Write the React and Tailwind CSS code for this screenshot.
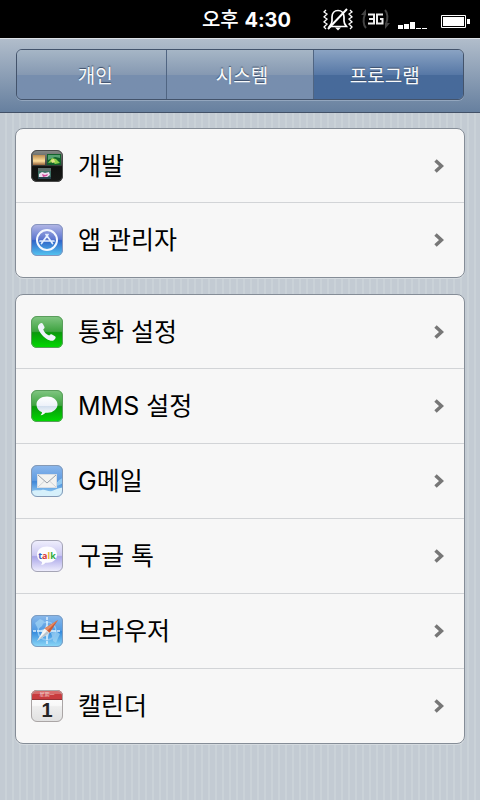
import React from 'react';

const frame = 'h-8 w-8 shrink-0';

function Gloss({ id, from, to, stroke, children }) {
  return (
    <svg viewBox="0 0 32 32" className={frame} aria-hidden="true">
      <defs>
        <linearGradient id={id} x1="0" y1="0" x2="0" y2="1">
          <stop offset="0" stopColor={from[0]} />
          <stop offset="0.48" stopColor={from[1]} />
          <stop offset="0.52" stopColor={to[0]} />
          <stop offset="1" stopColor={to[1]} />
        </linearGradient>
        <clipPath id={id + 'c'}><rect width="32" height="32" rx="6" /></clipPath>
      </defs>
      <g clipPath={`url(#${id}c)`}>
        <rect width="32" height="32" fill={`url(#${id})`} />
        {children}
      </g>
      <rect x="0.5" y="0.5" width="31" height="31" rx="5.5" fill="none" stroke={stroke} />
    </svg>
  );
}

const DevIcon = () => (
  <Gloss id="dev" from={['#8a8d8a', '#3a3d3b']} to={['#101210', '#161816']} stroke="#4a4a4a">
    <defs>
      <linearGradient id="sunset" x1="0" y1="0" x2="0" y2="1">
        <stop offset="0" stopColor="#b98a4e" /><stop offset="0.6" stopColor="#ffdf9c" /><stop offset="1" stopColor="#93613a" />
      </linearGradient>
    </defs>
    <rect x="2" y="5" width="12" height="10" fill="url(#sunset)" />
    <rect x="16" y="4" width="14" height="11" fill="#12612c" />
    <path d="M17 5h12v3l-5-1-7 3z" fill="#57a272" />
    <path d="M17 13l4-5 4 1 4 4-5 1-2-2z" fill="#8fd04b" />
    <path d="M20 10l3-1 1 3-3 1z" fill="#e5e08a" />
    <rect x="7" y="18" width="13" height="11" fill="#3e7265" />
    <rect x="7" y="18" width="13" height="3" fill="#5d6f6b" />
    <path d="M8 24l3-2 3 1 4-1 1 3-4 3-4-1-3 1z" fill="#eddff0" />
    <path d="M11 24l3 1 3-1-1 2-4 1z" fill="#d34a9c" />
    <path d="M7 27h13v2H7z" fill="#28424d" />
  </Gloss>
);

const StoreIcon = () => (
  <Gloss id="store" from={['#b6b9e6', '#5c76cf']} to={['#2f63c8', '#55c8f2']} stroke="#8795bd">
    <circle cx="16" cy="16" r="10" fill="none" stroke="#f4f8ff" strokeWidth="2" />
    <path d="M17 10.500l-6.500 9M15 10.500l6.500 9M9 17h14" fill="none" stroke="#e6f0ff" strokeWidth="1.700" strokeLinecap="round" />
  </Gloss>
);

const PhoneIcon = () => (
  <Gloss id="phone" from={['#83c784', '#3ea340']} to={['#0a980c', '#00dc00']} stroke="#5a9d5c">
    <path d="M8 8.500c1.500-1.800 3-2 3.800-.8l1.600 3c.5 1-.2 1.900-1.200 2.700 1.200 3 3 4.800 6 6.200.9-1.200 1.800-1.700 2.800-1.200l3 1.900c1.200.9.800 2.400-1.200 3.900-1.500 1.100-4 .8-7.500-1.400C11 19.700 7.500 15 7 11.500c-.2-1.200.2-2.200 1-3z" fill="#eef3fa" />
  </Gloss>
);

const MessageIcon = () => (
  <Gloss id="message" from={['#83c784', '#3ea340']} to={['#0a980c', '#00dc00']} stroke="#5a9d5c">
    <defs>
      <linearGradient id="bubble" x1="0" y1="0" x2="0" y2="1">
        <stop offset="0" stopColor="#fff" /><stop offset="0.48" stopColor="#eef2fa" /><stop offset="0.52" stopColor="#d2dfee" /><stop offset="1" stopColor="#fff" />
      </linearGradient>
    </defs>
    <path d="M16 6.500c6 0 10.500 3.500 10.500 8s-4.500 8.300-10 8.300h-2c-1 1.200-2.500 2.200-5 2.500 1-.9 1.500-1.800 1.500-3C7.500 20.800 5.500 18 5.500 14.500c0-4.500 4.500-8 10.500-8z" fill="url(#bubble)" />
  </Gloss>
);

const MailIcon = () => (
  <Gloss id="mail" from={['#8db8ec', '#5f9be0']} to={['#3f87d8', '#b0e1fa']} stroke="#8499b5">
    <path d="M0 27c4-3 8-1 11-2s6 2 10 1 7-4 11-3v9H0z" fill="#d6f0fb" />
    <path d="M23 19c3-1 5-5 9-6v5c-3 2-5 3-8 3z" fill="#8fc8f2" />
    <rect x="6.500" y="9.500" width="19" height="13" fill="#f3f3f1" stroke="#d7dde5" />
    <path d="M7 22l6.500-6M25 22l-6.500-6" stroke="#d0d3d6" />
    <path d="M7 10l9 8 9-8" fill="none" stroke="#999fa8" />
  </Gloss>
);

const TalkIcon = () => (
  <Gloss id="talk" from={['#f1f0fd', '#cbc8f2']} to={['#aaa6e8', '#f3f2ff']} stroke="#a5a5b5">
    <path d="M16 6.500c6 0 10 3.500 10 8.200s-4 8-9.500 8h-2c-1 1.200-2 1.900-4.500 2.300 1-.9 1-1.800 1-3C7.700 20.700 6 18 6 14.700c0-4.700 4-8.200 10-8.200z" fill="#fcfcff" />
    <text x="16" y="19" textAnchor="middle" className="font-['Open_Sans',sans-serif] text-[9px] font-bold">
      <tspan fill="#2d5fc4">t</tspan><tspan fill="#d93a3a">a</tspan><tspan fill="#e8b52c">l</tspan><tspan fill="#2fab42">k</tspan>
    </text>
  </Gloss>
);

const BrowserIcon = () => (
  <Gloss id="browser" from={['#8bb9ea', '#529be3']} to={['#3489dc', '#8fdbf8']} stroke="#7d9cc0">
    <path d="M4 8l5-4 4 2-2 5-4 3zM20 18l5-2 4 3-2 4-2 5-3-2-1-5z" fill="#a3d5f3" opacity="0.7" />
    <circle cx="16" cy="16" r="9" fill="none" stroke="#8fc6f1" strokeWidth="1.500" />
    <path d="M16 2v28M2 16h28" stroke="#dff1ff" strokeWidth="1.500" strokeDasharray="3 1" />
    <path d="M16 6l2 8 8 2-8 2-2 8-2-8-8-2 8-2z" fill="#c3e3fa" />
    <path d="M27 5L18.500 18l-5-4.500z" fill="#c95a37" />
    <path d="M27 5L16 16l-2.500-2.500z" fill="#e48b66" />
    <path d="M6 26l7.500-12.500 5 4.500z" fill="#f6f6f4" />
    <path d="M6 26l10-10 2.500 2z" fill="#bcc5ce" />
  </Gloss>
);

const CalendarIcon = () => (
  <Gloss id="calendar" from={['#ffffff', '#f8f8f8']} to={['#eeeeee', '#e0e0e0']} stroke="#aaa5a5">
    <rect width="32" height="9" fill="#c83c3f" />
    <rect width="32" height="4" fill="#d66b6b" />
    <path d="M0 9.500h32" stroke="#953236" />
    <text x="16" y="6" textAnchor="middle" fill="#f5d5d5" className="font-['Noto_Sans_CJK_SC',sans-serif] text-[5px]">星期一</text>
    <text x="16" y="27" textAnchor="middle" fill="#252525" className="font-['Liberation_Sans',sans-serif] text-[20px] font-bold">1</text>
  </Gloss>
);

const groups = [
  [
    ['개발', DevIcon],
    ['앱 관리자', StoreIcon],
  ],
  [
    ['통화 설정', PhoneIcon],
    ['MMS 설정', MessageIcon],
    ['G메일', MailIcon],
    ['구글 톡', TalkIcon],
    ['브라우저', BrowserIcon],
    ['캘린더', CalendarIcon],
  ],
];

function StatusBar() {
  return (
    <div className="flex h-[38px] items-center justify-end bg-black pr-2.5 text-white">
      <span className="mr-8 pt-0.5 font-['Inter','Noto_Sans_CJK_KR',sans-serif] text-xl leading-6">
        <span className="font-medium">오후</span> <span className="font-bold">4:30</span>
      </span>
      <svg viewBox="0 0 30 24" className="mr-2 h-6 w-[30px]" fill="none" stroke="#fff" aria-hidden="true">
        <path d="M3 3l-2 2 3 2-3 3 3 2-3 3 3 2-3 3 2 2M27 3l2 2-3 2 3 3-3 2 3 3-3 2 3 3-2 2" strokeWidth="1.300" />
        <path d="M6.500 19.500h17c-1.500-2-2.500-3-2.500-5.500v-4c0-4-2.500-6.500-6-6.500S9 6 9 10v4c0 2.500-1 3.500-2.500 5.500z" strokeWidth="1.700" />
        <path d="M5 22L24 2" strokeWidth="2" />
        <path d="M12 20.500h6l-3 3z" fill="#fff" stroke="none" />
      </svg>
      <svg viewBox="0 0 29 22" className="mr-2 h-[22px] w-[29px]" aria-hidden="true">
        <path d="M5 20c-3-3-3-9-1-14M24 2c3 3 3 9 1 14" fill="none" stroke="#444" strokeWidth="2" />
        <path d="M0 7l5-6v6zM29 15l-5 6v-6z" fill="#444" />
        <path d="M7 6.500h6v9H7M8 11h5M22 6.500h-6v9h5.500V11H19" fill="none" stroke="#eee" strokeWidth="2" />
      </svg>
      <svg viewBox="0 0 30 24" className="mr-3 h-6 w-[30px]" fill="#fff" shapeRendering="crispEdges" aria-hidden="true">
        <path d="M0 18h5v4H0zM6 17h5v5H6zM12 15h5v7h-5zM18 21h5v1h-5zM24 21h5v1h-5z" />
      </svg>
      <svg viewBox="0 0 30 24" className="h-6 w-[30px]" aria-hidden="true">
        <path d="M1.500 8.500h24v12h-24z" fill="none" stroke="#fff" />
        <path d="M3 10h21v9H3zM27 12h3v5h-3z" fill="#fff" />
      </svg>
    </div>
  );
}

function Tabs() {
  const shared = "pt-1 text-center text-[19px] leading-6 text-[#f8fafc] [text-shadow:0_-1px_1px_#3a4c66]";
  const plain = "bg-linear-to-b from-[#a6b6c6] from-0% via-[#8699b2] via-50% to-[#778eae] to-50%";
  const current = "bg-linear-to-b from-[#8aa3c3] from-0% via-[#5778a6] via-50% to-[#476a9a] to-50%";
  return (
    <header className="border-t border-b border-t-[#dce1e7] border-b-[#425167] bg-linear-to-b from-[#b1bdcb] to-[#67809f] px-4 pt-2.5 pb-3">
      <nav className="grid h-[51px] grid-cols-3 overflow-hidden rounded-md border border-[#43536b] shadow-[0_1px_0_#93a6be]">
        <button type="button" className={`${shared} ${plain} pl-2`}>개인</button>
        <button type="button" className={`${shared} ${plain} border-x border-[#506582] pl-1`}>시스템</button>
        <button type="button" aria-current="page" className={`${shared} ${current} pr-2`}>프로그램</button>
      </nav>
    </header>
  );
}

export default function App() {
  return (
    <div className="flex min-h-screen flex-col bg-[#c4ccd4] bg-[repeating-linear-gradient(90deg,#c3cbd3_0px,#c3cbd3_5px,#cad2d8_5px,#cad2d8_7px)] font-['Inter','Noto_Sans_CJK_KR',sans-serif]">
      <StatusBar />
      <Tabs />
      <main className="flex flex-col gap-4 px-[15px] py-[15px]">
        {groups.map((rows, i) => (
          <ul key={i} className="overflow-hidden rounded-lg border border-[#858d97] bg-[#f7f7f7] shadow-[0_1px_0_#d5dbe0]">
            {rows.map(([label, Icon]) => (
              <li key={label} className="h-[75px] border-b border-[#d2d4d7] first:h-[74px] last:h-[74px] last:border-b-0">
                <button type="button" className="flex h-full w-full items-center pr-5 pl-[15px] text-left">
                  <Icon />
                  <span className="ml-[15px] flex-1 text-[25px] leading-8 text-black">{label}</span>
                  <svg viewBox="0 0 10 14" className="h-3.5 w-2.5" fill="none" stroke="#777" strokeWidth="3.500" aria-hidden="true">
                    <path d="M1.500 1.500L7.500 7l-6 5.500" />
                  </svg>
                </button>
              </li>
            ))}
          </ul>
        ))}
      </main>
    </div>
  );
}
